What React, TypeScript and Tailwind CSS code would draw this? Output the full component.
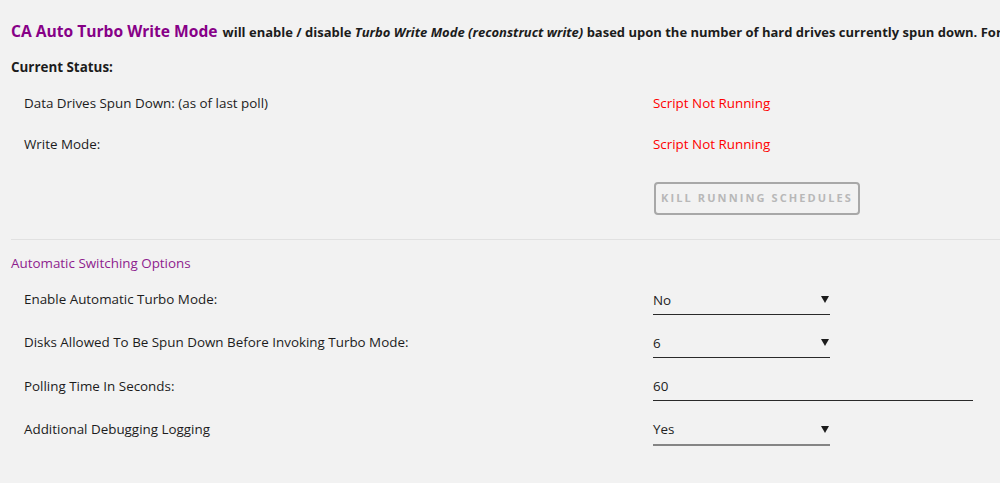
import React from "react";

const font = { fontFamily: '"Open Sans", "Noto Sans", sans-serif' };

function Arrow() {
  return (
    <svg width="8" height="7" viewBox="0 0 8 7" className="absolute right-[1px] top-[11px]">
      <path d="M0 0 L8 0 L4 7 Z" fill="#1c1c1c" />
    </svg>
  );
}

function Select({ value, grey }: { value: string; grey?: boolean }) {
  return (
    <div
      className={
        "relative w-[177px] h-[30px] flex items-center text-[13.4px] text-[#222] " +
        (grey ? "border-b-2 border-[#858585] h-[31px]" : "border-b-[1.5px] border-[#2a2a2a]")
      }
    >
      <span className="pt-[1px]">{value}</span>
      <Arrow />
    </div>
  );
}

export default function App() {
  return (
    <div className="w-[1000px] h-[483px] overflow-hidden bg-[#f2f2f2] text-[#1c1c1c]" style={font}>
      <div className="pl-[11px]">
        <div className="pt-[20px] h-[51.5px] whitespace-nowrap flex items-baseline">
          <span className="text-[15.6px] font-bold text-[#870087]">CA Auto Turbo Write Mode</span>
          <span className="text-[13px] font-bold ml-[5px]">
            will enable / disable <i>Turbo Write Mode (reconstruct write)</i> based upon the number of hard drives currently spun down. For more information about Turbo Write Mode, see here
          </span>
        </div>
        <div className="h-[31px] flex items-center text-[13.4px] font-bold">Current Status:</div>
        <div className="h-[41px] flex items-center text-[13.4px]">
          <div className="pl-[13px] w-[642px]">Data Drives Spun Down: (as of last poll)</div>
          <div className="text-[#ff0000]">Script Not Running</div>
        </div>
        <div className="h-[41px] flex items-center text-[13.4px]">
          <div className="pl-[13px] w-[642px]">Write Mode:</div>
          <div className="text-[#ff0000]">Script Not Running</div>
        </div>
        <div className="pt-[17px] flex">
          <div className="w-[643px]" />
          <button className="h-[33px] w-[206px] rounded-[4px] border-2 border-[#a8a8a8] bg-[#f2f2f2] text-[11px] font-bold tracking-[2.1px] text-[#b8b8b8]">
            KILL RUNNING SCHEDULES
          </button>
        </div>
        <div className="mt-[24px] border-t border-[#e1e1e1]" />
        <div className="h-[38px] pt-[10px] flex items-center text-[13.4px] text-[#8e1d8e]">Automatic Switching Options</div>
        <div className="h-[43.3px] flex items-center text-[13.4px]">
          <div className="pl-[13px] w-[642px]">Enable Automatic Turbo Mode:</div>
          <div className="pt-[2px]"><Select value="No" /></div>
        </div>
        <div className="h-[43.3px] flex items-center text-[13.4px]">
          <div className="pl-[13px] w-[642px]">Disks Allowed To Be Spun Down Before Invoking Turbo Mode:</div>
          <div className="pt-[2px]"><Select value="6" /></div>
        </div>
        <div className="h-[43.3px] flex items-center text-[13.4px]">
          <div className="pl-[13px] w-[642px]">Polling Time In Seconds:</div>
          <div className="pt-[2px] w-[320px] h-[31px] flex items-center border-b-[1.5px] border-[#2a2a2a]">60</div>
        </div>
        <div className="h-[43.3px] flex items-center text-[13.4px]">
          <div className="pl-[13px] w-[642px]">Additional Debugging Logging</div>
          <div className="pt-[2px]"><Select value="Yes" grey /></div>
        </div>
      </div>
    </div>
  );
}
